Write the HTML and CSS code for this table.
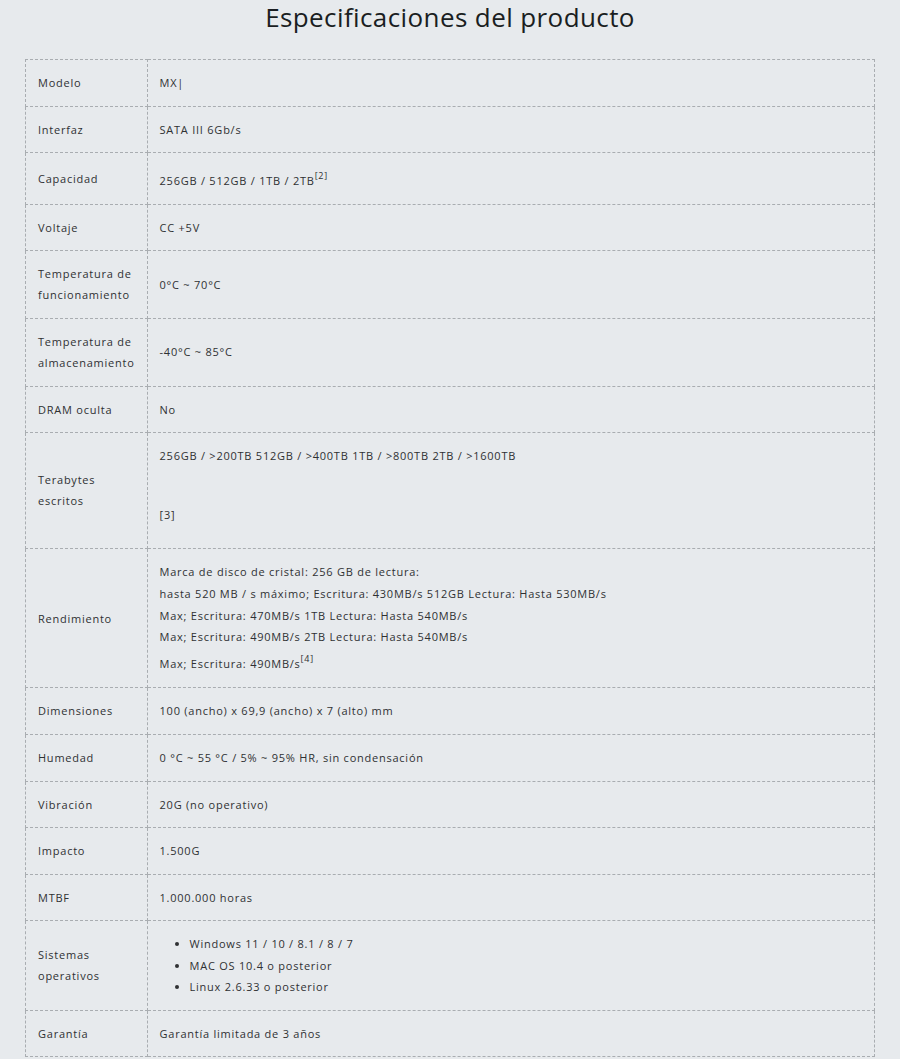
FILE: index.html
```html
<!DOCTYPE html>
<html lang="es">
<head>
<meta charset="utf-8">
<title>Especificaciones del producto</title>
<link rel="stylesheet" href="styles.css">
</head>
<body>
<main class="page">
  <h1 class="title">Especificaciones del producto</h1>
  <table class="specs">
    <tbody>
      <tr><th>Modelo</th><td>MX|</td></tr>
      <tr><th>Interfaz</th><td>SATA III 6Gb/s</td></tr>
      <tr><th>Capacidad</th><td>256GB / 512GB / 1TB / 2TB<sup>[2]</sup></td></tr>
      <tr><th>Voltaje</th><td>CC +5V</td></tr>
      <tr><th>Temperatura de funcionamiento</th><td>0°C ~ 70°C</td></tr>
      <tr><th>Temperatura de almacenamiento</th><td>-40°C ~ 85°C</td></tr>
      <tr><th>DRAM oculta</th><td>No</td></tr>
      <tr><th>Terabytes escritos</th><td><div class="tbw-line">256GB / &gt;200TB 512GB / &gt;400TB 1TB / &gt;800TB 2TB / &gt;1600TB</div><div class="tbw-ref">[3]</div></td></tr>
      <tr><th>Rendimiento</th><td class="perf">Marca de disco de cristal: 256 GB de lectura:<br>hasta 520 MB / s máximo; Escritura: 430MB/s 512GB Lectura: Hasta 530MB/s<br>Max; Escritura: 470MB/s 1TB Lectura: Hasta 540MB/s<br>Max; Escritura: 490MB/s 2TB Lectura: Hasta 540MB/s<br>Max; Escritura: 490MB/s<sup>[4]</sup></td></tr>
      <tr><th>Dimensiones</th><td>100 (ancho) x 69,9 (ancho) x 7 (alto) mm</td></tr>
      <tr><th>Humedad</th><td>0 °C ~ 55 °C / 5% ~ 95% HR, sin condensación</td></tr>
      <tr><th>Vibración</th><td>20G (no operativo)</td></tr>
      <tr><th>Impacto</th><td>1.500G</td></tr>
      <tr><th>MTBF</th><td>1.000.000 horas</td></tr>
      <tr><th>Sistemas operativos</th><td><ul class="os"><li>Windows 11 / 10 / 8.1 / 8 / 7</li><li>MAC OS 10.4 o posterior</li><li>Linux 2.6.33 o posterior</li></ul></td></tr>
      <tr><th>Garantía</th><td>Garantía limitada de 3 años</td></tr>
    </tbody>
  </table>
</main>
</body>
</html>
```

FILE: styles.css
```css
html, body {
  margin: 0;
  padding: 0;
  background: #e7eaed;
}
body {
  font-family: "Open Sans", "Noto Sans", sans-serif;
  color: #2f3133;
}
.page {
  padding: 0 25px;
}
.title {
  margin: 0;
  padding-top: 0;
  height: 59px;
  text-align: center;
  font-size: 26px;
  font-weight: 400;
  line-height: 34px;
  color: #1a1e22;
  letter-spacing: 0.4px;
}
.specs {
  width: 850px;
  border-collapse: collapse;
  font-size: 11px;
  letter-spacing: 0.76px;
  line-height: 21px;
}
.specs th,
.specs td {
  border: 1px dashed #a9adb1;
  padding: 12px 12px 12.6px;
  vertical-align: middle;
  text-align: left;
  font-weight: 400;
}
.specs th {
  width: 94px;
}
.specs sup {
  font-size: 9px;
  line-height: 21px;
  vertical-align: 6px;
}
.specs .perf {
  line-height: 21.7px;
}
.tbw-line {
  margin-bottom: 38px;
}
.tbw-ref {
  margin-bottom: 10.5px;
}
.os {
  margin: 0;
  padding-left: 30px;
  list-style: disc;
}
.os li {
  line-height: 21.3px;
}
```
